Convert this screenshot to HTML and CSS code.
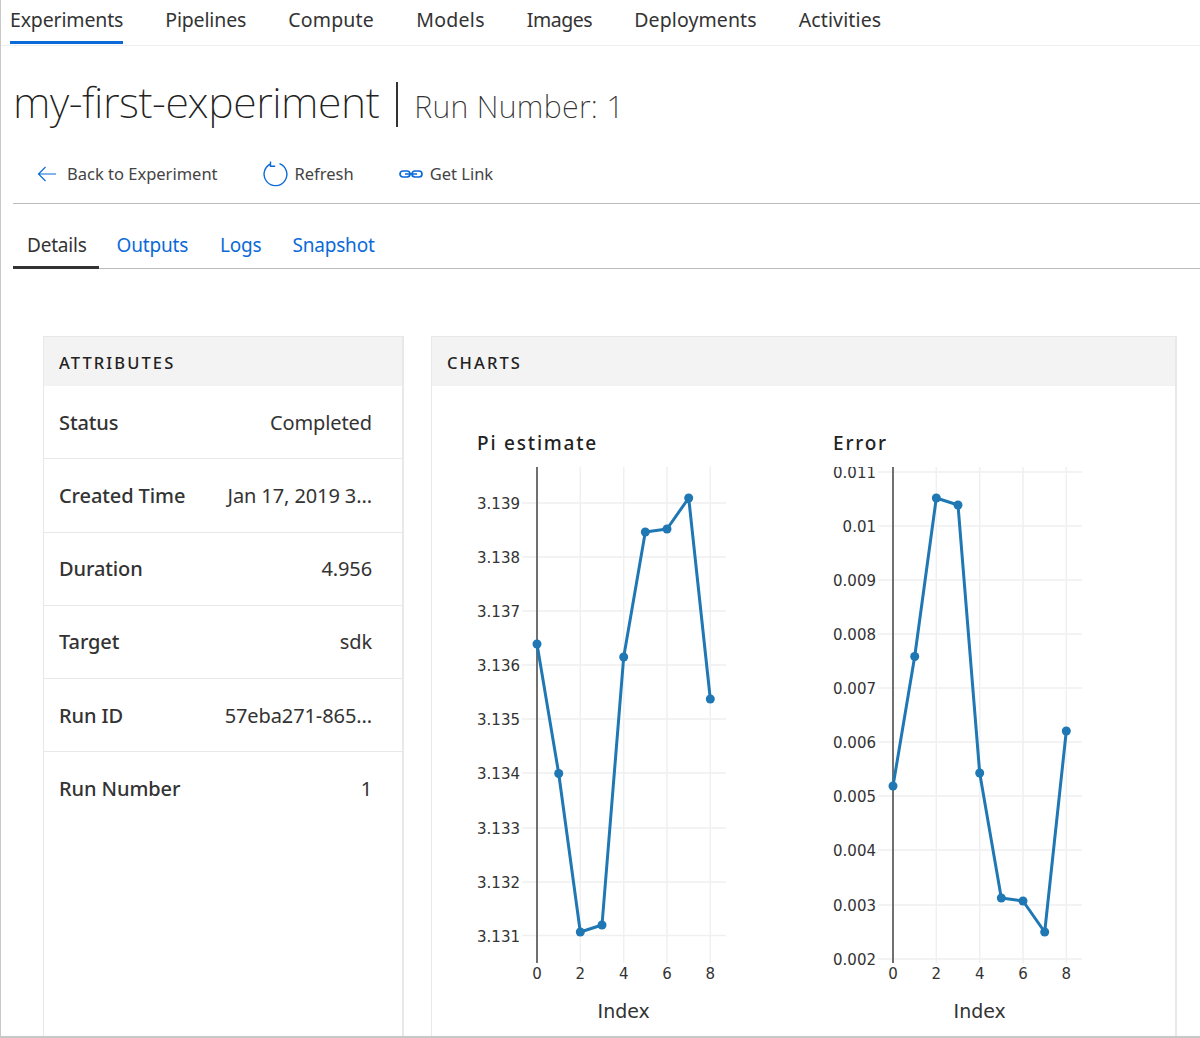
FILE: index.html
```html
<!DOCTYPE html>
<html>
  <head>
    <title>my-first-experiment</title>
    <link rel="stylesheet" href="styles.css">
  </head>
  <body>
    <div class="frame">
      <nav class="topnav">
        <a class="topnav_item active">Experiments</a>
        <a class="topnav_item">Pipelines</a>
        <a class="topnav_item">Compute</a>
        <a class="topnav_item">Models</a>
        <a class="topnav_item">Images</a>
        <a class="topnav_item">Deployments</a>
        <a class="topnav_item">Activities</a>
      </nav>

      <h1 class="title">
        <span class="title_name">my-first-experiment</span>
        <span class="title_sep"></span>
        <span class="title_run">Run Number: 1</span>
      </h1>

      <div class="toolbar">
        <a class="tool tool_back">
          <svg width="20" height="16" viewBox="0 0 20 16"><path d="M19 8H1.500M8.500 1L1.500 8l7 7" fill="none" stroke="#0b6ad8" stroke-width="1.200"/></svg>
          Back to Experiment
        </a>
        <a class="tool tool_refresh">
          <svg width="26" height="26" viewBox="0 0 26 26"><path d="M16.500 2.600A11.400 11.400 0 1 1 7.500 3M7.500 0.500V5.200H12.200" fill="none" stroke="#0b6ad8" stroke-width="1.400"/></svg>
          Refresh
        </a>
        <a class="tool tool_link">
          <svg width="24" height="10" viewBox="0 0 24 10"><rect x="1" y="2" width="10" height="6" rx="3" fill="none" stroke="#0b6ad8" stroke-width="1.700"/><rect x="13" y="2" width="10" height="6" rx="3" fill="none" stroke="#0b6ad8" stroke-width="1.700"/><path d="M6 5H18" stroke="#0b6ad8" stroke-width="1.500"/></svg>
          Get Link
        </a>
      </div>

      <div class="tabs">
        <a class="tab active">Details</a>
        <a class="tab">Outputs</a>
        <a class="tab">Logs</a>
        <a class="tab">Snapshot</a>
      </div>

      <div class="content">
        <section class="card card_attrs">
          <h2 class="card_head">ATTRIBUTES</h2>
          <div class="attr"><span class="attr_name">Status</span><span class="attr_value">Completed</span></div>
          <div class="attr"><span class="attr_name">Created Time</span><span class="attr_value">Jan 17, 2019 3...</span></div>
          <div class="attr"><span class="attr_name">Duration</span><span class="attr_value">4.956</span></div>
          <div class="attr"><span class="attr_name">Target</span><span class="attr_value">sdk</span></div>
          <div class="attr"><span class="attr_name">Run ID</span><span class="attr_value">57eba271-865...</span></div>
          <div class="attr attr_last"><span class="attr_name">Run Number</span><span class="attr_value">1</span></div>
        </section>

        <section class="card card_charts">
          <h2 class="card_head">CHARTS</h2>
          <div class="charts">
            <div class="chart">
              <h3 class="chart_title">Pi estimate</h3>
              <svg class="plot" width="356" height="570" viewBox="0 0 356 570">
                <g class="grid">
                  <path d="M60 0V496M103.300 0V496M146.700 0V496M190 0V496M233.300 0V496"/>
                  <path d="M45 36H249M45 90H249M45 144H249M45 198H249M45 252H249M45 306H249M45 361H249M45 415H249M45 468.500H249"/>
                </g>
                <path class="axis" d="M60 0V496"/>
                <g class="ylabels">
                  <text x="43" y="42">3.139</text>
                  <text x="43" y="96">3.138</text>
                  <text x="43" y="150">3.137</text>
                  <text x="43" y="204">3.136</text>
                  <text x="43" y="258">3.135</text>
                  <text x="43" y="312">3.134</text>
                  <text x="43" y="367">3.133</text>
                  <text x="43" y="421">3.132</text>
                  <text x="43" y="475">3.131</text>
                </g>
                <g class="xlabels">
                  <text x="60" y="512">0</text>
                  <text x="103.300" y="512">2</text>
                  <text x="146.700" y="512">4</text>
                  <text x="190" y="512">6</text>
                  <text x="233.300" y="512">8</text>
                </g>
                <text class="xtitle" x="146.700" y="551">Index</text>
                <polyline class="line" points="60,177 81.700,306.500 103.300,465 125,458 146.700,190 168.300,65 190,62 211.700,31 233.300,232"/>
                <g class="dots">
                  <circle cx="60" cy="177" r="4.500"/>
                  <circle cx="81.700" cy="306.500" r="4.500"/>
                  <circle cx="103.300" cy="465" r="4.500"/>
                  <circle cx="125" cy="458" r="4.500"/>
                  <circle cx="146.700" cy="190" r="4.500"/>
                  <circle cx="168.300" cy="65" r="4.500"/>
                  <circle cx="190" cy="62" r="4.500"/>
                  <circle cx="211.700" cy="31" r="4.500"/>
                  <circle cx="233.300" cy="232" r="4.500"/>
                </g>
              </svg>
            </div>
            <div class="chart">
              <h3 class="chart_title">Error</h3>
              <svg class="plot" width="306" height="570" viewBox="0 0 306 570">
                <g class="grid">
                  <path d="M60 0V496M103.300 0V496M146.700 0V496M190 0V496M233.300 0V496"/>
                  <path d="M45 5H249M45 59H249M45 113H249M45 167H249M45 221H249M45 275H249M45 329H249M45 383H249M45 438H249M45 492H249"/>
                </g>
                <path class="axis" d="M60 0V496"/>
                <g class="ylabels">
                  <text x="43" y="11">0.011</text>
                  <text x="43" y="65">0.01</text>
                  <text x="43" y="119">0.009</text>
                  <text x="43" y="173">0.008</text>
                  <text x="43" y="227">0.007</text>
                  <text x="43" y="281">0.006</text>
                  <text x="43" y="335">0.005</text>
                  <text x="43" y="389">0.004</text>
                  <text x="43" y="444">0.003</text>
                  <text x="43" y="498">0.002</text>
                </g>
                <g class="xlabels">
                  <text x="60" y="512">0</text>
                  <text x="103.300" y="512">2</text>
                  <text x="146.700" y="512">4</text>
                  <text x="190" y="512">6</text>
                  <text x="233.300" y="512">8</text>
                </g>
                <text class="xtitle" x="146.700" y="551">Index</text>
                <polyline class="line" points="60,319 81.700,189.500 103.300,31 125,38 146.700,306 168.300,431 190,434 211.700,465 233.300,264"/>
                <g class="dots">
                  <circle cx="60" cy="319" r="4.500"/>
                  <circle cx="81.700" cy="189.500" r="4.500"/>
                  <circle cx="103.300" cy="31" r="4.500"/>
                  <circle cx="125" cy="38" r="4.500"/>
                  <circle cx="146.700" cy="306" r="4.500"/>
                  <circle cx="168.300" cy="431" r="4.500"/>
                  <circle cx="190" cy="434" r="4.500"/>
                  <circle cx="211.700" cy="465" r="4.500"/>
                  <circle cx="233.300" cy="264" r="4.500"/>
                </g>
              </svg>
            </div>
          </div>
        </section>
      </div>
    </div>
  </body>
</html>
```

FILE: styles.css
```css
html, body
{
  margin: 0;
  height: 100%;
  background: #fff;
}
body
{
  font-family: "Noto Sans", "Open Sans", sans-serif;
  color: #333;
  overflow: hidden;
}
.frame
{
  box-sizing: border-box;
  height: 1038px;
  border-left: 1px solid #c8c8c8;
  border-bottom: 2px solid #c8c8c8;
  overflow: hidden;
}

/* top navigation */
.topnav
{
  display: flex;
  gap: 42px;
  height: 46px;
  box-sizing: border-box;
  padding-left: 9px;
  border-bottom: 1px solid #eee;
}
.topnav_item
{
  height: 44px;
  box-sizing: border-box;
  padding-top: 6px;
  font-size: 19.500px;
  line-height: 27px;
  color: #333;
  letter-spacing: -0.150px;
}
.topnav_item.active
{
  border-bottom: 3px solid #0b6ad8;
}
.topnav_item:nth-child(3)
{
  min-width: 86px;
  letter-spacing: 0.200px;
}
.topnav_item:nth-child(4)
{
  min-width: 68px;
  letter-spacing: 0.300px;
}
.topnav_item:nth-child(5)
{
  letter-spacing: -0.450px;
}
.topnav_item:nth-child(6)
{
  min-width: 122px;
  letter-spacing: 0.100px;
}
.topnav_item:nth-child(7)
{
  letter-spacing: 0.150px;
}

/* heading */
.title
{
  display: flex;
  align-items: center;
  margin: 0;
  padding: 28px 0 0 12px;
  height: 56px;
  font-weight: 200;
  color: #222;
}
.title_name
{
  font-size: 43px;
  line-height: 56px;
  letter-spacing: -0.430px;
}
.title_sep
{
  width: 2px;
  height: 45px;
  margin: 4px 16px 0 17px;
  background: #333;
}
.title_run
{
  font-size: 30.500px;
  line-height: 40px;
  margin-top: 8px;
  letter-spacing: 0.300px;
  color: #333;
}

/* actions */
.toolbar
{
  display: flex;
  align-items: center;
  height: 59px;
  margin: 14px 0 0 12px;
  border-bottom: 1px solid #bbb;
  font-size: 16.500px;
  color: #444;
}
.tool
{
  display: flex;
  align-items: center;
}
.tool_back
{
  margin-left: 24px;
  gap: 10px;
}
.tool_refresh
{
  margin-left: 45px;
  gap: 6px;
}
.tool_link
{
  margin-left: 45px;
  gap: 7px;
}

/* tabs */
.tabs
{
  display: flex;
  height: 65px;
  box-sizing: border-box;
  margin-left: 12px;
  border-bottom: 1px solid #bbb;
  font-size: 19px;
  letter-spacing: -0.200px;
}
.tab
{
  height: 65px;
  box-sizing: border-box;
  padding: 28px 14px 0;
  line-height: 27px;
  margin-right: 4px;
  color: #0b6ad8;
}
.tab:nth-child(3)
{
  margin-right: 3px;
}
.tab.active
{
  padding-right: 12px;
  color: #333;
  border-bottom: 3px solid #333;
}

/* cards */
.content
{
  display: flex;
  gap: 27px;
  padding: 67px 23px 0 42px;
}
.card
{
  box-sizing: border-box;
  height: 720px;
  border: 1px solid #e8e8e8;
  border-width: 1px 2px 1px 1px;
}
.card_attrs
{
  flex: none;
  width: 361px;
}
.card_charts
{
  flex: 1;
}
.card_head
{
  margin: 0;
  height: 49px;
  padding-left: 15px;
  background: #f3f3f3;
  font-size: 16.500px;
  font-weight: 500;
  line-height: 52px;
  letter-spacing: 2.100px;
  color: #222;
}
.attr
{
  display: flex;
  justify-content: space-between;
  align-items: center;
  height: 72.250px;
  padding: 0 30px 0 15px;
  border-bottom: 1px solid #e8e8e8;
  font-size: 20px;
  letter-spacing: -0.100px;
}
.attr_last
{
  border-bottom: 0;
}
.attr_name
{
  font-weight: 500;
}

/* charts */
.charts
{
  display: flex;
  padding-left: 45px;
}
.chart
{
  flex: none;
}
.chart_title
{
  margin: 0;
  height: 81px;
  padding-top: 42px;
  box-sizing: border-box;
  font-size: 19px;
  font-weight: 500;
  line-height: 30px;
  letter-spacing: 1.800px;
  color: #222;
}
.plot
{
  display: block;
  font-family: "DejaVu Sans", sans-serif;
  font-size: 15px;
  fill: #333;
}
.grid path
{
  fill: none;
  stroke: #f0f0f0;
  stroke-width: 1.500;
}
.axis
{
  fill: none;
  stroke: #444;
  stroke-width: 1.500;
}
.ylabels text
{
  text-anchor: end;
}
.xlabels text
{
  text-anchor: middle;
}
.xtitle
{
  text-anchor: middle;
  font-size: 19px;
}
.line
{
  fill: none;
  stroke: #1f77b4;
  stroke-width: 3;
  stroke-linejoin: round;
}
.dots circle
{
  fill: #1f77b4;
}
```
